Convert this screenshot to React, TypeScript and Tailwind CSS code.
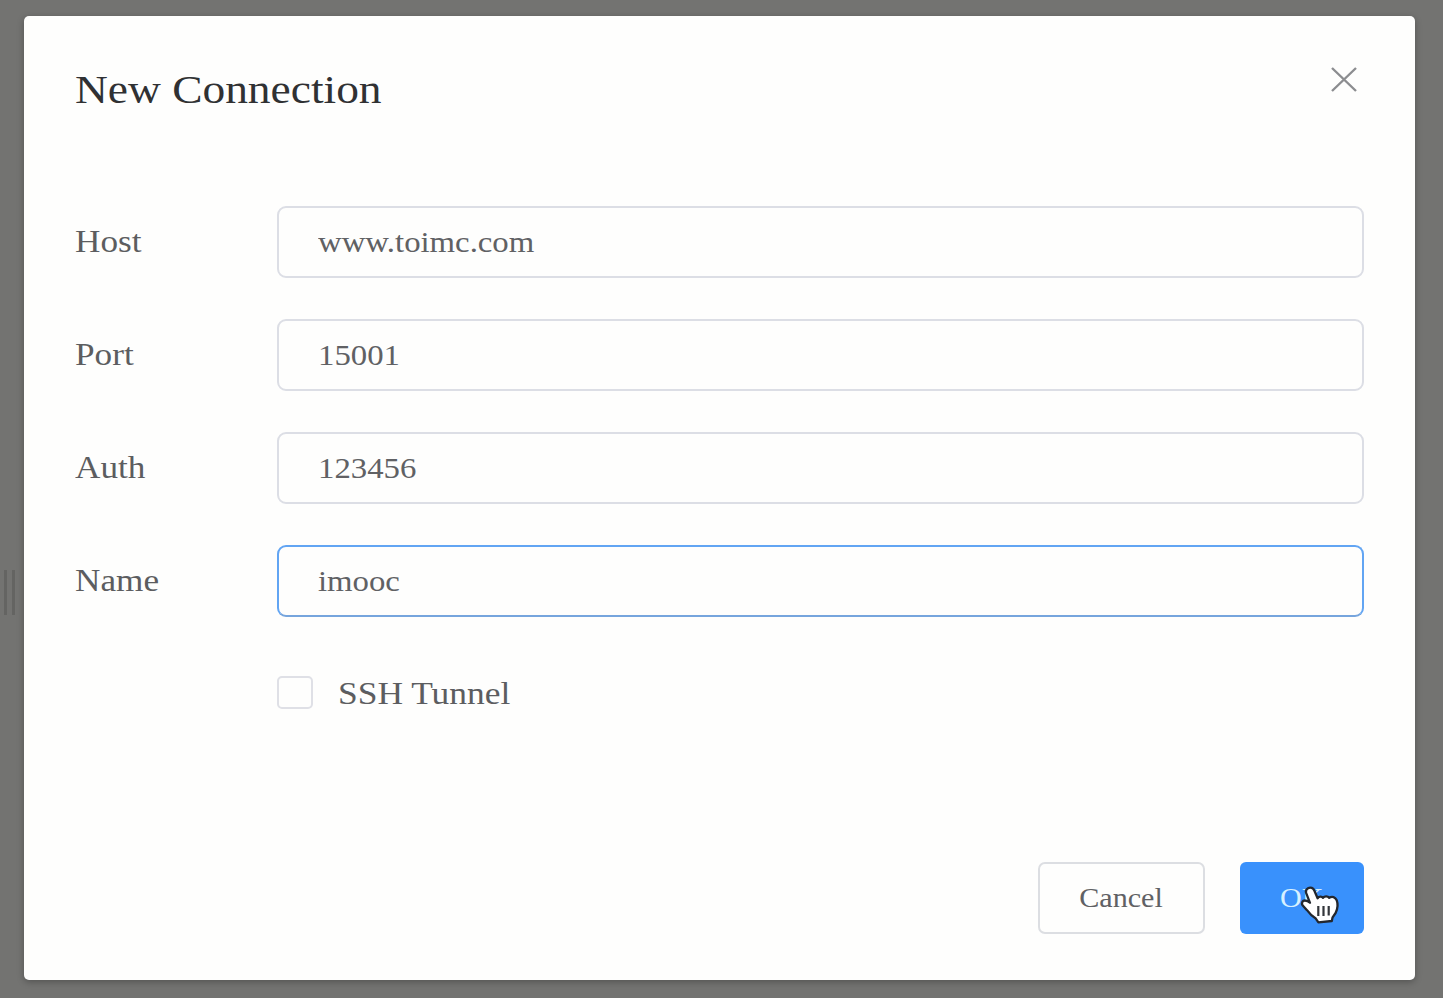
import React from 'react';

type Field = { label: string; value: string; focused?: boolean };

const fields: Field[] = [
  { label: 'Host', value: 'www.toimc.com' },
  { label: 'Port', value: '15001' },
  { label: 'Auth', value: '123456' },
  { label: 'Name', value: 'imooc', focused: true },
];

function FieldRow({ label, value, focused }: Field) {
  return (
    <div className="flex h-[72px] items-center">
      <div className="w-[202px] shrink-0 pb-[3px]">
        <span className="inline-block origin-left scale-x-110 text-[32px] leading-[40px] text-[#5c5d60]">{label}</span>
      </div>
      <div
        className={
          focused
            ? 'flex h-[72px] flex-1 items-center rounded-[9px] border-2 border-[#62a5f3] border-b-[#76a5dd] pl-[39px]'
            : 'flex h-[72px] flex-1 items-center rounded-[9px] border-2 border-[#dcdee5] pl-[39px]'
        }
      >
        <span className="inline-block origin-left scale-x-[1.107] text-[29.6px] leading-[40px] text-[#606164]">{value}</span>
      </div>
    </div>
  );
}

function HandCursor() {
  return (
    <svg className="absolute left-[60px] top-[23px]" width="42" height="42" viewBox="0 0 42 42" fill="none">
      <path
        d="M8 3.2C10.6 1.8 13.4 3 14.3 5.5L17.6 13.2C19 11.4 21.8 11.2 23 12.8C24.6 10.8 27.8 10.8 29.2 12.8C32 10.8 35.4 12 36.7 15.2C38.1 19 37.6 24 35.6 28L32.6 32.3L31.8 36L18.4 37.3L15.8 33.6C12.5 31.6 9.6 28.8 7 25.2L2.5 20.2C1.3 18 2.4 15.5 4.9 15.5C6.8 15.5 8.6 16.4 10 17.8L6.2 8.2C5.4 6 6.2 4.2 8 3.2Z"
        fill="#fff"
        stroke="#23272e"
        strokeWidth="2.3"
        strokeLinejoin="round"
      />
      <path d="M18.3 21V31M23.5 21V31M28.7 21V30.5" stroke="#33363b" strokeWidth="2.2" />
    </svg>
  );
}

export default function App() {
  return (
    <div className="flex h-[998px] w-[1443px] overflow-hidden bg-[#737371] font-['Liberation_Serif',serif]">
      <div className="flex w-[24px] shrink-0 gap-[5px] pl-[4px] pt-[570px]">
        <div className="h-[45px] w-[3px] bg-[#646462]" />
        <div className="h-[45px] w-[3px] bg-[#646462]" />
      </div>
      <div className="mt-[15.5px] flex h-[964px] w-[1391px] flex-col rounded-[5px] bg-[#fefefd] pl-[51px] pr-[51px] shadow-[0_2px_7px_rgba(0,0,0,0.28)]">
        <div className="flex h-[190.5px] items-start justify-between">
          <h1 className="mt-[48.5px] origin-left scale-x-[1.108] text-[41px] leading-[50px] text-[#303133]">New Connection</h1>
          <svg className="mr-[6px] mt-[50.5px]" width="28" height="27" viewBox="0 0 28 27" fill="none">
            <path d="M2 2L26 25M26 2L2 25" stroke="#8c8d90" strokeWidth="2.4" />
          </svg>
        </div>
        <div className="flex flex-col gap-[41px]">
          {fields.map((f) => (
            <FieldRow key={f.label} label={f.label} value={f.value} focused={f.focused} />
          ))}
        </div>
        <div className="mt-[55px] flex h-[40px] items-center pl-[202px]">
          <div className="h-[33px] w-[36px] rounded-[5px] border-2 border-[#dfe0e6]" />
          <span className="ml-[25px] mt-[2px] inline-block origin-left scale-x-[1.107] text-[32px] leading-[40px] text-[#5c5d60]">SSH Tunnel</span>
        </div>
        <div className="mt-[150px] flex h-[72px] justify-end gap-[35px]">
          <button className="flex w-[167px] items-center justify-center rounded-[7px] border-2 border-[#dcdee2]">
            <span className="inline-block scale-x-110 text-[27.4px] leading-[36px] text-[#606164]">Cancel</span>
          </button>
          <button className="relative flex w-[124px] items-center rounded-[6px] bg-[#3991fc] pl-[40px]">
            <span className="inline-block origin-left scale-x-110 text-[27.4px] leading-[36px] text-[#d6f0ff]">OK</span>
            <HandCursor />
          </button>
        </div>
      </div>
    </div>
  );
}
